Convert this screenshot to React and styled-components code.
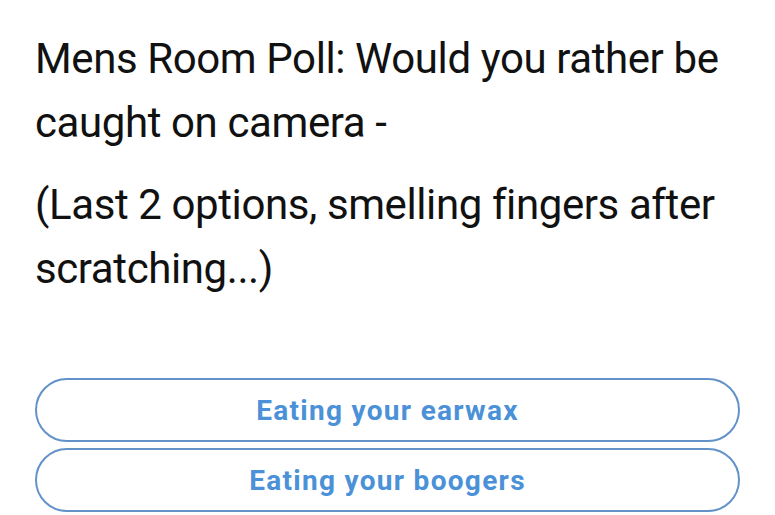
import React from 'react';
import styled, {createGlobalStyle} from 'styled-components';

const GlobalStyle = createGlobalStyle`
    html, body {
        margin: 0;
        padding: 0;
        background: #ffffff;
    }
    body {
        font-family: Roboto, "Liberation Sans", Arial, sans-serif;
    }
`;

const Card = styled.div`
    width: 775px;
    height: 515px;
    box-sizing: border-box;
    padding: 27px 35px 0 35px;
    overflow: hidden;
    display: flex;
    flex-direction: column;
`;

const Body = styled.div`
    display: flex;
    flex-direction: column;
    gap: 18px;
`;

const Para = styled.p`
    margin: 0;
    font-size: 42px;
    line-height: 64px;
    letter-spacing: -0.4px;
    color: #111111;
    font-weight: 400;
`;

const Choices = styled.div`
    margin-top: 77px;
    display: flex;
    flex-direction: column;
    gap: 6px;
`;

const Choice = styled.button`
    height: 64px;
    width: 100%;
    box-sizing: border-box;
    border: 2px solid #6292c8;
    border-radius: 32px;
    background: #ffffff;
    color: #4b91d8;
    font-family: Roboto, "Liberation Sans", Arial, sans-serif;
    font-size: 28px;
    font-weight: 700;
    letter-spacing: 1.3px;
    display: flex;
    align-items: center;
    justify-content: center;
    padding: 0;
    cursor: pointer;
`;

const options = ['Eating your earwax', 'Eating your boogers'];

export default function App() {
    return (
        <>
            <GlobalStyle/>
            <Card>
                <Body>
                    <Para>Mens Room Poll: Would you rather be caught on camera -</Para>
                    <Para>(Last 2 options, smelling fingers after scratching...)</Para>
                </Body>
                <Choices>
                    {options.map(o => <Choice key={o}>{o}</Choice>)}
                </Choices>
            </Card>
        </>
    );
}
